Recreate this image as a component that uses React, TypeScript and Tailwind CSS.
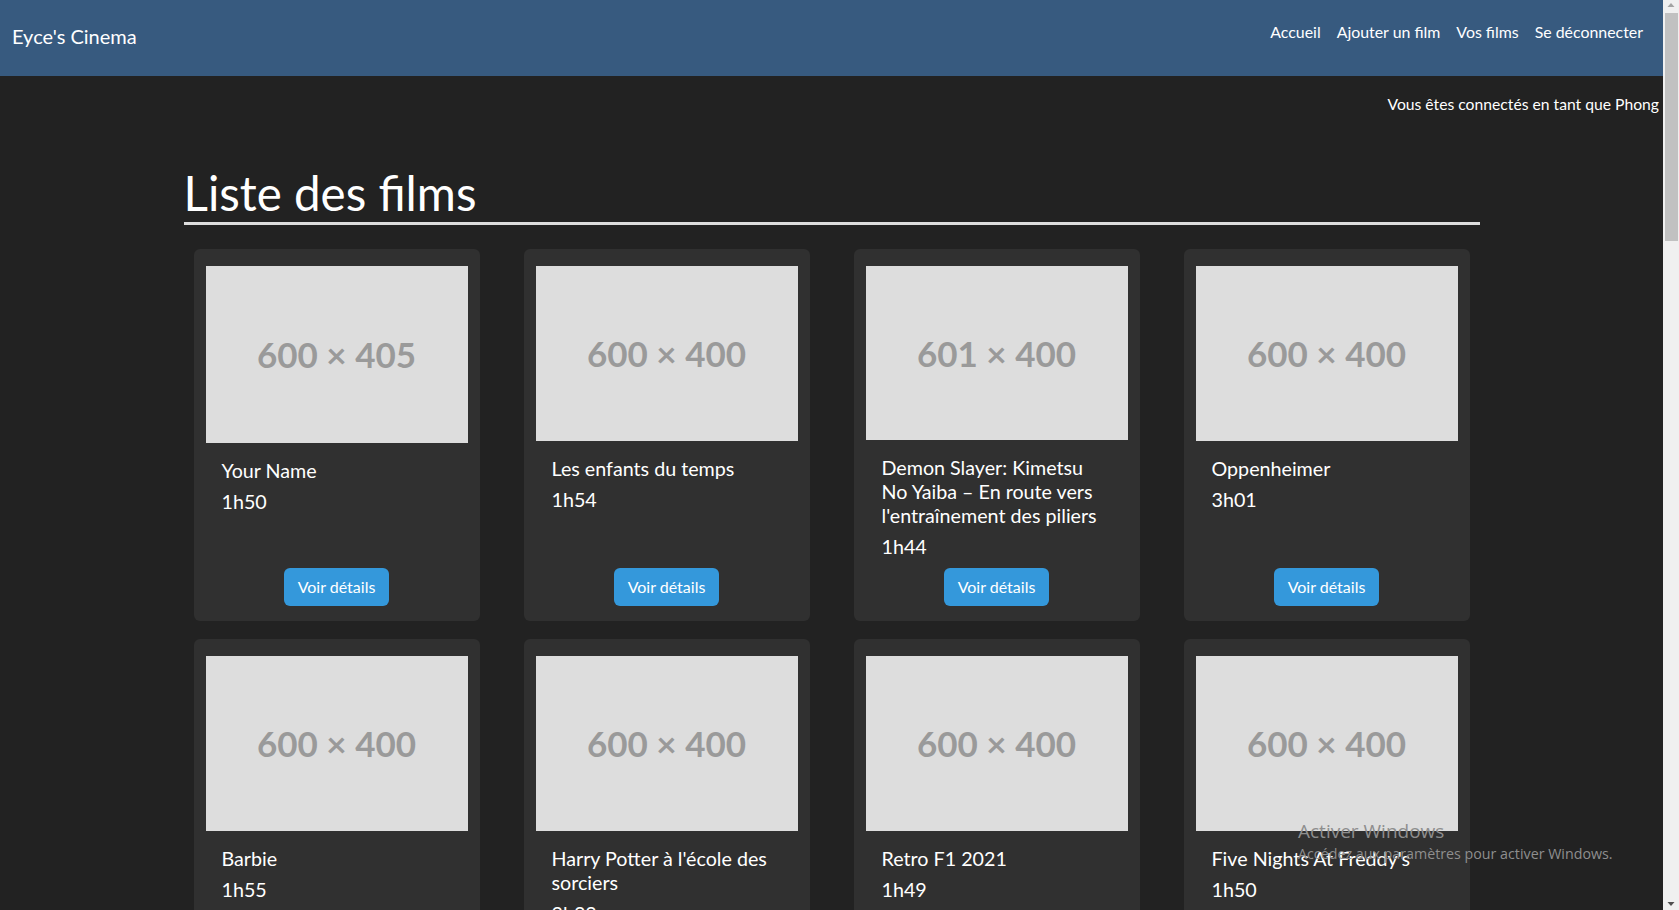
import React from "react";

type Film = { title: string; duration: string; w: number; h: number };

const films: Film[] = [
  { title: "Your Name", duration: "1h50", w: 600, h: 405 },
  { title: "Les enfants du temps", duration: "1h54", w: 600, h: 400 },
  {
    title: "Demon Slayer: Kimetsu No Yaiba – En route vers l'entraînement des piliers",
    duration: "1h44",
    w: 601,
    h: 400,
  },
  { title: "Oppenheimer", duration: "3h01", w: 600, h: 400 },
  { title: "Barbie", duration: "1h55", w: 600, h: 400 },
  { title: "Harry Potter à l'école des sorciers", duration: "2h32", w: 600, h: 400 },
  { title: "Retro F1 2021", duration: "1h49", w: 600, h: 400 },
  { title: "Five Nights At Freddy's", duration: "1h50", w: 600, h: 400 },
];

function Card({ film }: { film: Film }) {
  return (
    <div className="h-full flex flex-col bg-[#303030] rounded-md px-3 pt-[17px] pb-[15px]">
      <div
        className="bg-[#dddddd] flex items-center justify-center"
        style={{ aspectRatio: `${film.w} / ${film.h}` }}
      >
        <span className="text-[35px] font-bold text-[#9a9a9a] leading-none">
          {film.w} × {film.h}
        </span>
      </div>
      <div className="flex flex-col flex-1 px-4 pt-4">
        <h5 className="text-[19.7px] leading-[24px] mb-[7px] text-white">{film.title}</h5>
        <p className="text-[19.7px] leading-[24px] mb-[9px] text-white">{film.duration}</p>
        <div className="mt-auto flex justify-center">
          <button className="bg-[#3498db] text-white text-[16px] leading-6 px-[14px] py-[7px] rounded-md">
            Voir détails
          </button>
        </div>
      </div>
    </div>
  );
}

export default function App() {
  return (
    <div className="flex h-[910px] overflow-hidden font-['Lato',sans-serif] text-white bg-[#222222]">
      <div className="flex-1 min-w-0 overflow-hidden relative">
        <nav className="h-[76px] bg-[#375a7f] flex items-center justify-between px-3">
          <span className="text-[20px] leading-[30px] mb-[4px]">Eyce's Cinema</span>
          <div className="flex mb-[12px] text-[15.9px] leading-6">
            <a className="px-2">Accueil</a>
            <a className="px-2">Ajouter un film</a>
            <a className="px-2">Vos films</a>
            <a className="px-2">Se déconnecter</a>
          </div>
        </nav>
        <p className="text-right pr-[4px] mt-4 text-[15.7px] leading-6">
          Vous êtes connectés en tant que Phong
        </p>
        <div className="w-[1320px] mx-auto px-3 mt-[48px]">
          <h1 className="text-[47.5px] leading-[58px] font-normal border-b-[3px] border-[#dddddd]">
            Liste des films
          </h1>
          <div className="grid grid-cols-4 -mx-3 mt-6">
            {films.map((f) => (
              <div key={f.title} className="px-[22px] pb-[18px]">
                <Card film={f} />
              </div>
            ))}
          </div>
        </div>
        <div className="absolute left-[1298px] top-[819px] text-[#8e8e8e] font-['Open_Sans',sans-serif] pointer-events-none">
          <div className="text-[19px] leading-[25px]">Activer Windows</div>
          <div className="text-[14.25px] leading-[20px]">
            Accédez aux paramètres pour activer Windows.
          </div>
        </div>
      </div>
      <div className="w-[16px] h-full bg-[#f0f0f0] flex flex-col items-center">
        <svg width="16" height="13" viewBox="0 0 16 13" className="shrink-0">
          <polygon points="4.5,7 8,3 11.5,7" fill="#a3a3a3" />
        </svg>
        <div className="w-[13px] h-[228px] bg-[#c1c1c1] ml-[1px]" />
        <div className="flex-1" />
        <svg width="16" height="13" viewBox="0 0 16 13" className="shrink-0">
          <polygon points="4.5,5 11.5,5 8,9" fill="#505050" />
        </svg>
      </div>
    </div>
  );
}
